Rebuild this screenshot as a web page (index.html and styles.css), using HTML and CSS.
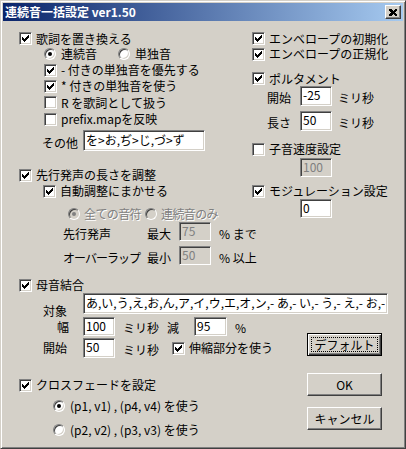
FILE: index.html
```html
<!DOCTYPE html>
<html lang="ja">
<head>
    <meta charset="UTF-8">
    <title>連続音一括設定</title>
    <link rel="stylesheet" href="styles.css">
</head>
<body>
    <svg class="defs" width="0" height="0">
        <symbol id="chk" viewBox="0 0 7 7">
            <path d="M0 2h1v3h-1zM1 3h1v3h-1zM2 4h1v3h-1zM3 3h1v3h-1zM4 2h1v3h-1zM5 1h1v3h-1zM6 0h1v3h-1z" fill="#000"/>
        </symbol>
    </svg>

    <div class="window">
        <div class="titlebar">
            <span class="title">連続音一括設定 ver1.50</span>
            <span class="close">
                <svg width="8" height="7" viewBox="0 0 8 7" shape-rendering="crispEdges">
                    <path d="M0 0h2l2 2 2-2h2v1l-2 2.5 2 2.5v1h-2l-2-2-2 2h-2v-1l2-2.5-2-2.5z" fill="#000"/>
                </svg>
            </span>
        </div>

        <div class="client">
            <div class="top">
                <!-- 左側 -->
                <div class="col-l">
                    <div class="row h15"><span class="cb"><svg><use href="#chk"/></svg></span>歌詞を置き換える</div>
                    <div class="row h16 ind25">
                        <span class="rb on"></span><span class="rb-text">連続音</span>
                        <span class="rb"></span><span class="rb-text">単独音</span>
                    </div>
                    <div class="row h16 ind25"><span class="cb"><svg><use href="#chk"/></svg></span>- 付きの単独音を優先する</div>
                    <div class="row h16 ind25"><span class="cb"><svg><use href="#chk"/></svg></span>* 付きの単独音を使う</div>
                    <div class="row h17 ind25"><span class="cb"></span>R を歌詞として扱う</div>
                    <div class="row h16 ind25"><span class="cb"></span>prefix.mapを反映</div>
                    <div class="row other">
                        <span class="lbl-other">その他</span>
                        <input class="edit w122" type="text" value="を>お,ぢ>じ,づ>ず">
                    </div>

                    <div class="row h16 pre-head"><span class="cb"><svg><use href="#chk"/></svg></span>先行発声の長さを調整</div>
                    <div class="row h16 ind24"><span class="cb"><svg><use href="#chk"/></svg></span>自動調整にまかせる</div>
                    <div class="row h16 pre-mode">
                        <span class="rb on off"></span><span class="rb-text dim">全ての音符</span>
                        <span class="rb off"></span><span class="rb-text dim">連続音のみ</span>
                    </div>
                    <div class="row pre-val">
                        <span class="lbl-pre">先行発声</span><span class="lbl-mm">最大</span>
                        <input class="edit w32" type="text" value="75" disabled>
                        <span class="unit">% まで</span>
                    </div>
                    <div class="row pre-val gap5">
                        <span class="lbl-pre narrow">オーバーラップ</span><span class="lbl-mm">最小</span>
                        <input class="edit w32" type="text" value="50" disabled>
                        <span class="unit">% 以上</span>
                    </div>
                </div>

                <!-- 右側 -->
                <div class="col-r">
                    <div class="row h15"><span class="cb"><svg><use href="#chk"/></svg></span>エンベロープの初期化</div>
                    <div class="row h16"><span class="cb"><svg><use href="#chk"/></svg></span>エンベロープの正規化</div>
                    <div class="row h15 porta"><span class="cb"><svg><use href="#chk"/></svg></span>ポルタメント</div>
                    <div class="row h20 ind15">
                        <span class="lbl-porta">開始</span>
                        <input class="edit w32" type="text" value="-25">
                        <span class="ms">ミリ秒</span>
                    </div>
                    <div class="row h20 ind15 gap5">
                        <span class="lbl-porta">長さ</span>
                        <input class="edit w32" type="text" value="50">
                        <span class="ms">ミリ秒</span>
                    </div>
                    <div class="row h16 speed"><span class="cb"></span>子音速度設定</div>
                    <div class="row h19 ind48 gap1"><input class="edit w32" type="text" value="100" disabled></div>
                    <div class="row h16 gap6"><span class="cb"><svg><use href="#chk"/></svg></span>モジュレーション設定</div>
                    <div class="row h19 ind48"><input class="edit w32" type="text" value="0"></div>
                </div>
            </div>

            <div class="row h16 vowel-head"><span class="cb"><svg><use href="#chk"/></svg></span>母音結合</div>
            <div class="row target">
                <span class="lbl-low">対象</span>
                <input class="edit w305" type="text" value="あ,い,う,え,お,ん,ア,イ,ウ,エ,オ,ン,- あ,- い,- う,- え,- お,- ん,- ア,- イ">
            </div>

            <div class="lower">
                <div class="lower-l">
                    <div class="row h19">
                        <span class="lbl-low wide">幅</span>
                        <input class="edit w32" type="text" value="100">
                        <span class="ms-low">ミリ秒</span>
                        <span class="lbl-dec">減</span>
                        <input class="edit w33" type="text" value="95">
                        <span class="pct">%</span>
                    </div>
                    <div class="row h20 gap2">
                        <span class="lbl-low">開始</span>
                        <input class="edit w32" type="text" value="50">
                        <span class="ms-low long">ミリ秒</span>
                        <span class="cb"><svg><use href="#chk"/></svg></span>伸縮部分を使う
                    </div>
                    <div class="row h16 xfade"><span class="cb"><svg><use href="#chk"/></svg></span>クロスフェードを設定</div>
                    <div class="row h16 ind34 gap5"><span class="rb on"></span><span class="rb-text">(p1, v1) , (p4, v4) を使う</span></div>
                    <div class="row h16 ind34 gap8"><span class="rb"></span><span class="rb-text">(p2, v2) , (p3, v3) を使う</span></div>
                </div>
                <div class="buttons">
                    <button class="btn default"><span class="focus">デフォルト</span></button>
                    <button class="btn ok">OK</button>
                    <button class="btn cancel">キャンセル</button>
                </div>
            </div>
        </div>
    </div>
</body>
</html>
```

FILE: styles.css
```css
body {
    margin: 0;
    background: #d4d0c8;
    font-family: "Noto Sans CJK JP", "Noto Sans", sans-serif;
    font-size: 12px;
    color: #000;
}
.defs {
    position: absolute;
}
.window {
    width: 406px;
    height: 449px;
    box-sizing: border-box;
    border: 1px solid;
    border-color: #d4d0c8 #404040 #404040 #d4d0c8;
    box-shadow: inset 1px 1px #fff, inset -1px -1px #808080;
    padding: 2px;
    background: #d4d0c8;
    display: flex;
    flex-direction: column;
}
.titlebar {
    height: 18px;
    flex-shrink: 0;
    background: linear-gradient(to right, #0a246a, #a6caf0);
    display: flex;
    align-items: center;
    justify-content: space-between;
    padding: 0 2px;
}
.title {
    color: #fff;
    font-weight: bold;
    font-size: 12px;
    line-height: 18px;
}
.close {
    width: 16px;
    height: 14px;
    box-sizing: border-box;
    background: #d4d0c8;
    border: 1px solid;
    border-color: #fff #404040 #404040 #fff;
    box-shadow: inset -1px -1px #808080;
    display: flex;
    align-items: center;
    justify-content: center;
}
.client {
    flex: 1;
    padding: 10px 0 0 16px;
}
.top {
    display: flex;
}
.col-l {
    width: 233px;
    display: flex;
    flex-direction: column;
}
.col-r {
    display: flex;
    flex-direction: column;
}

/* 行 */
.row {
    display: flex;
    align-items: center;
    white-space: nowrap;
    line-height: 14px;
}
.h15 { height: 15px; }
.h16 { height: 16px; }
.h17 { height: 17px; }
.h19 { height: 19px; }
.h20 { height: 20px; }
.ind15 { padding-left: 15px; }
.ind24 { padding-left: 24px; }
.ind25 { padding-left: 25px; }
.ind34 { padding-left: 34px; }
.ind48 { padding-left: 48px; }
.gap1 { margin-top: 1px; }
.gap2 { margin-top: 2px; }
.gap5 { margin-top: 5px; }
.gap6 { margin-top: 6px; }
.gap8 { margin-top: 8px; }

/* チェックボックス */
.cb {
    width: 13px;
    height: 13px;
    box-sizing: border-box;
    flex-shrink: 0;
    border: 1px solid;
    border-color: #808080 #fff #fff #808080;
    box-shadow: inset 1px 1px #404040, inset -1px -1px #d4d0c8;
    background: #fff;
    margin-right: 4px;
    display: flex;
    align-items: center;
    justify-content: center;
}
.cb svg {
    width: 7px;
    height: 7px;
    shape-rendering: crispEdges;
}

/* ラジオボタン */
.rb {
    width: 12px;
    height: 12px;
    box-sizing: border-box;
    flex-shrink: 0;
    border-radius: 50%;
    border: 1px solid;
    border-color: #808080 #fff #fff #808080;
    box-shadow: inset 1px 1px #404040, inset -1px -1px #d4d0c8;
    background: #fff;
    display: flex;
    align-items: center;
    justify-content: center;
}
.rb.on::after {
    content: "";
    width: 4px;
    height: 4px;
    border-radius: 50%;
    background: #000;
}
.rb.off {
    background: #d4d0c8;
}
.rb.off.on::after {
    background: #808080;
}
.rb-text {
    margin-left: 5px;
    margin-right: 21px;
}
.dim {
    color: #808080;
    text-shadow: 1px 1px 0 #fff;
}

/* エディット */
.edit {
    box-sizing: border-box;
    height: 100%;
    margin: 0;
    border: 1px solid;
    border-color: #808080 #fff #fff #808080;
    box-shadow: inset 1px 1px #404040, inset -1px -1px #d4d0c8;
    background: #fff;
    padding: 0 2px 3px;
    font-family: inherit;
    font-size: 12px;
    color: #000;
    outline: none;
}
.edit:disabled {
    background: #d4d0c8;
    color: #808080;
    -webkit-text-fill-color: #808080;
    opacity: 1;
}
.w32 { width: 32px; }
.w33 { width: 33px; }
.w122 { width: 122px; }
.w305 { width: 305px; }

/* 左側 */
.other {
    height: 21px;
    margin-top: 3px;
    padding-left: 23px;
}
.lbl-other {
    width: 41px;
    padding-top: 4px;
}
.pre-head {
    margin-top: 16px;
}
.pre-mode {
    margin-top: 7px;
    padding-left: 49px;
}
.pre-mode .rb-text {
    margin-left: 4px;
    margin-right: 4px;
    letter-spacing: -0.6px;
}
.pre-val {
    height: 19px;
    padding-left: 44px;
}
.lbl-pre {
    width: 84px;
    padding-top: 4px;
    flex-shrink: 0;
}
.lbl-pre.narrow {
    letter-spacing: -1px;
}
.lbl-mm {
    width: 32px;
    padding-top: 4px;
    flex-shrink: 0;
}
.unit {
    margin-left: 8px;
    padding-top: 4px;
}

/* 右側 */
.porta {
    margin-top: 9px;
}
.lbl-porta {
    width: 33px;
    padding-top: 3px;
}
.ms {
    margin-left: 6px;
    padding-top: 3px;
}
.speed {
    margin-top: 10px;
}

/* 母音結合 */
.vowel-head {
    margin-top: 12px;
}
.target {
    height: 21px;
    align-items: flex-start;
}
.target .lbl-low {
    margin-top: 11px;
}
.lbl-low {
    width: 40px;
    padding-left: 24px;
    flex-shrink: 0;
}
.lbl-low.wide {
    width: 26px;
    padding-left: 38px;
}
.lower {
    display: flex;
    margin-top: 3px;
}
.lower-l {
    width: 288px;
    display: flex;
    flex-direction: column;
}
.ms-low {
    width: 44px;
    padding-left: 8px;
    padding-top: 3px;
    flex-shrink: 0;
}
.ms-low.long {
    width: 49px;
}
.lbl-dec {
    width: 27px;
    padding-top: 3px;
}
.pct {
    margin-left: 8px;
    padding-top: 3px;
}
.xfade {
    margin-top: 19px;
}

/* ボタン */
.buttons {
    display: flex;
    flex-direction: column;
    padding-top: 16px;
}
.btn {
    width: 75px;
    height: 23px;
    box-sizing: border-box;
    margin: 0;
    padding: 0;
    background: #d4d0c8;
    border: 1px solid;
    border-color: #fff #404040 #404040 #fff;
    box-shadow: inset -1px -1px #808080;
    font-family: inherit;
    font-size: 12px;
    color: #000;
    display: flex;
    align-items: center;
    justify-content: center;
}
.btn.default {
    border: 1px solid #000;
    box-shadow: inset 1px 1px #fff, inset -1px -1px #404040, inset -2px -2px #808080;
    padding: 3px;
}
.focus {
    flex: 1;
    align-self: stretch;
    border: 1px dotted #000;
    display: flex;
    align-items: center;
    justify-content: center;
}
.ok {
    margin-top: 17px;
}
.cancel {
    margin-top: 11px;
}
```
